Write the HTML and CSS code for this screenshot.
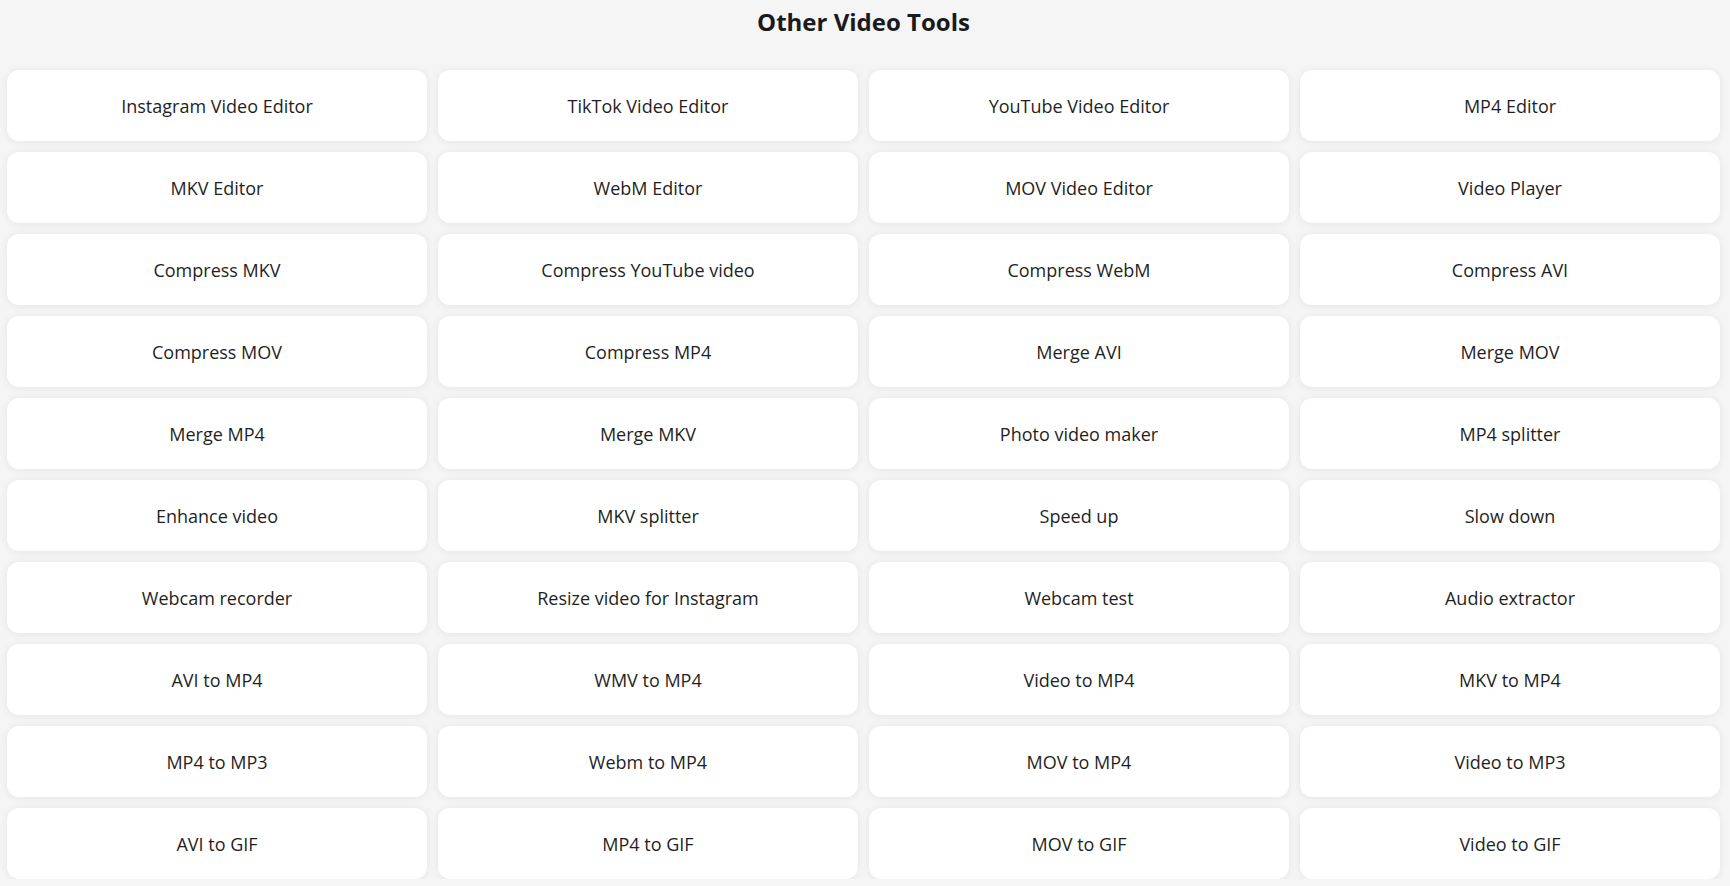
FILE: index.html
```html
<!DOCTYPE html>
<html lang="en">
<head>
  <meta charset="UTF-8">
  <meta name="viewport" content="width=device-width, initial-scale=1">
  <title>Other Video Tools</title>
  <link rel="stylesheet" href="styles.css">
</head>
<body>
  <div class="tools">
    <h2>Other Video Tools</h2>
    <div class="tool-grid">
      <a class="tool" href="#">Instagram Video Editor</a>
      <a class="tool" href="#">TikTok Video Editor</a>
      <a class="tool" href="#">YouTube Video Editor</a>
      <a class="tool" href="#">MP4 Editor</a>

      <a class="tool" href="#">MKV Editor</a>
      <a class="tool" href="#">WebM Editor</a>
      <a class="tool" href="#">MOV Video Editor</a>
      <a class="tool" href="#">Video Player</a>

      <a class="tool" href="#">Compress MKV</a>
      <a class="tool" href="#">Compress YouTube video</a>
      <a class="tool" href="#">Compress WebM</a>
      <a class="tool" href="#">Compress AVI</a>

      <a class="tool" href="#">Compress MOV</a>
      <a class="tool" href="#">Compress MP4</a>
      <a class="tool" href="#">Merge AVI</a>
      <a class="tool" href="#">Merge MOV</a>

      <a class="tool" href="#">Merge MP4</a>
      <a class="tool" href="#">Merge MKV</a>
      <a class="tool" href="#">Photo video maker</a>
      <a class="tool" href="#">MP4 splitter</a>

      <a class="tool" href="#">Enhance video</a>
      <a class="tool" href="#">MKV splitter</a>
      <a class="tool" href="#">Speed up</a>
      <a class="tool" href="#">Slow down</a>

      <a class="tool" href="#">Webcam recorder</a>
      <a class="tool" href="#">Resize video for Instagram</a>
      <a class="tool" href="#">Webcam test</a>
      <a class="tool" href="#">Audio extractor</a>

      <a class="tool" href="#">AVI to MP4</a>
      <a class="tool" href="#">WMV to MP4</a>
      <a class="tool" href="#">Video to MP4</a>
      <a class="tool" href="#">MKV to MP4</a>

      <a class="tool" href="#">MP4 to MP3</a>
      <a class="tool" href="#">Webm to MP4</a>
      <a class="tool" href="#">MOV to MP4</a>
      <a class="tool" href="#">Video to MP3</a>

      <a class="tool" href="#">AVI to GIF</a>
      <a class="tool" href="#">MP4 to GIF</a>
      <a class="tool" href="#">MOV to GIF</a>
      <a class="tool" href="#">Video to GIF</a>
    </div>
  </div>
</body>
</html>
```

FILE: styles.css
```css
body {
  margin: 0;
  background: #f5f5f5;
  font-family: "Open Sans", Arial, sans-serif;
  color: #1f1f1f;
}
.tools {
  padding: 0 10px 0 7px;
}
.tools h2 {
  margin: 7px 0 33px;
  font-size: 24px;
  line-height: 30px;
  font-weight: 700;
  text-align: center;
  color: #1a1a1a;
}
.tool-grid {
  display: grid;
  grid-template-columns: repeat(4, 1fr);
  gap: 11px;
}
.tool {
  display: flex;
  align-items: center;
  justify-content: center;
  height: 71px;
  background: #fff;
  border-radius: 12px;
  box-shadow: 0 1px 8px rgba(0,0,0,0.07);
  font-size: 18px;
  color: #1f1f1f;
  text-decoration: none;
}
```
